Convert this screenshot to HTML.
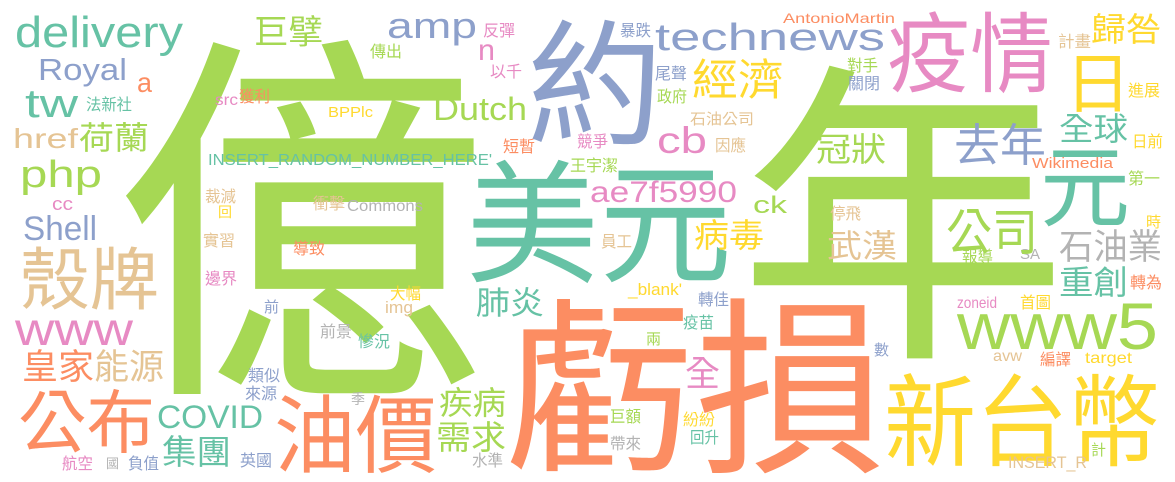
<!DOCTYPE html>
<html><head><meta charset="utf-8"><style>
html,body{margin:0;padding:0;background:#fff;width:1175px;height:482px;overflow:hidden}
svg{display:block}
text{font-family:"Liberation Sans","Noto Sans CJK TC",sans-serif}
.G{fill:#a6d854}.O{fill:#fc8d62}.B{fill:#8da0cb}.T{fill:#66c2a5}.Y{fill:#ffd92f}.P{fill:#e78ac3}.N{fill:#e5c494}.R{fill:#b3b3b3}
</style></head><body>
<svg width="1175" height="482" viewBox="0 0 1175 482" xmlns="http://www.w3.org/2000/svg">
<!-- big words -->
<text class="G" transform="translate(114,364) scale(0.97,1)" x="0" y="0" font-size="385">億</text>
<text class="G" transform="translate(738,333) scale(1,0.96)" x="0" y="0" font-size="330">年</text>
<text class="O" x="505" y="458" font-size="190" textLength="380" lengthAdjust="spacingAndGlyphs">虧損</text>
<text class="T" x="466" y="272" font-size="133" textLength="266" lengthAdjust="spacingAndGlyphs">美元</text>
<text class="B" x="527" y="134" font-size="136">約</text>
<text class="P" x="887" y="85" font-size="87" textLength="166" lengthAdjust="spacingAndGlyphs">疫情</text>
<text class="Y" x="884" y="458" font-size="100" textLength="276" lengthAdjust="spacingAndGlyphs">新台幣</text>
<text class="O" x="274" y="466" font-size="85" textLength="163" lengthAdjust="spacingAndGlyphs">油價</text>
<text class="N" x="20" y="304" font-size="68" textLength="139" lengthAdjust="spacingAndGlyphs">殼牌</text>
<text class="O" x="18" y="447" font-size="69" textLength="137" lengthAdjust="spacingAndGlyphs">公布</text>
<text class="Y" x="1065" y="107" font-size="66">日</text>
<text class="T" x="1040" y="219" font-size="90">元</text>
<!-- latin medium -->
<text class="T" x="15" y="47" font-size="44" textLength="168" lengthAdjust="spacingAndGlyphs">delivery</text>
<text class="B" x="38" y="80" font-size="31" textLength="89" lengthAdjust="spacingAndGlyphs">Royal</text>
<text class="O" x="137" y="92" font-size="28" textLength="15" lengthAdjust="spacingAndGlyphs">a</text>
<text class="T" x="25" y="117" font-size="40" textLength="53" lengthAdjust="spacingAndGlyphs">tw</text>
<text class="N" x="13" y="148" font-size="28" textLength="65" lengthAdjust="spacingAndGlyphs">href</text>
<text class="G" x="20" y="187" font-size="38" textLength="82" lengthAdjust="spacingAndGlyphs">php</text>
<text class="P" x="52" y="210" font-size="18" textLength="21" lengthAdjust="spacingAndGlyphs">cc</text>
<text class="B" x="23" y="240" font-size="34" textLength="74" lengthAdjust="spacingAndGlyphs">Shell</text>
<text class="P" x="15" y="345" font-size="46" textLength="118" lengthAdjust="spacingAndGlyphs">www</text>
<text class="T" x="157" y="428" font-size="32" textLength="106" lengthAdjust="spacingAndGlyphs">COVID</text>
<text class="T" x="208" y="165" font-size="16" textLength="284" lengthAdjust="spacingAndGlyphs">INSERT_RANDOM_NUMBER_HERE'</text>
<text class="P" x="215" y="105" font-size="16" textLength="23" lengthAdjust="spacingAndGlyphs">src</text>
<text class="Y" x="328" y="117" font-size="15" textLength="45" lengthAdjust="spacingAndGlyphs">BPPlc</text>
<text class="B" x="387" y="38" font-size="36" textLength="90" lengthAdjust="spacingAndGlyphs">amp</text>
<text class="P" x="478" y="60" font-size="30" textLength="17" lengthAdjust="spacingAndGlyphs">n</text>
<text class="G" x="433" y="120" font-size="32" textLength="94" lengthAdjust="spacingAndGlyphs">Dutch</text>
<text class="R" x="347" y="211" font-size="16" textLength="76" lengthAdjust="spacingAndGlyphs">Commons</text>
<text class="N" x="385" y="313" font-size="17" textLength="28" lengthAdjust="spacingAndGlyphs">img</text>
<text class="Y" x="628" y="295" font-size="17" textLength="54" lengthAdjust="spacingAndGlyphs">_blank'</text>
<text class="P" x="590" y="202" font-size="30" textLength="147" lengthAdjust="spacingAndGlyphs">ae7f5990</text>
<text class="B" x="655" y="50" font-size="38" textLength="230" lengthAdjust="spacingAndGlyphs">technews</text>
<text class="O" x="783" y="23" font-size="14" textLength="112" lengthAdjust="spacingAndGlyphs">AntonioMartin</text>
<text class="P" x="657" y="153" font-size="37" textLength="50" lengthAdjust="spacingAndGlyphs">cb</text>
<text class="G" x="753" y="213" font-size="24" textLength="34" lengthAdjust="spacingAndGlyphs">ck</text>
<text class="O" x="1032" y="168" font-size="15" textLength="81" lengthAdjust="spacingAndGlyphs">Wikimedia</text>
<text class="R" x="1020" y="259" font-size="15" textLength="20" lengthAdjust="spacingAndGlyphs">SA</text>
<text class="P" x="957" y="308" font-size="16" textLength="40" lengthAdjust="spacingAndGlyphs">zoneid</text>
<text class="G" x="957" y="349" font-size="66" textLength="201" lengthAdjust="spacingAndGlyphs">www5</text>
<text class="N" x="993" y="361" font-size="16" textLength="29" lengthAdjust="spacingAndGlyphs">avw</text>
<text class="Y" x="1085" y="363" font-size="16" textLength="47" lengthAdjust="spacingAndGlyphs">target</text>
<text class="N" x="1008" y="468" font-size="17" textLength="79" lengthAdjust="spacingAndGlyphs">INSERT_R</text>
<!-- CJK medium -->
<text class="G" x="79" y="149" font-size="32" textLength="70" lengthAdjust="spacingAndGlyphs">荷蘭</text>
<text class="O" x="22" y="379" font-size="35" textLength="72" lengthAdjust="spacingAndGlyphs">皇家</text>
<text class="N" x="94" y="379" font-size="35" textLength="70" lengthAdjust="spacingAndGlyphs">能源</text>
<text class="T" x="162" y="464" font-size="34" textLength="69" lengthAdjust="spacingAndGlyphs">集團</text>
<text class="G" x="254" y="44" font-size="34" textLength="69" lengthAdjust="spacingAndGlyphs">巨擘</text>
<text class="G" x="439" y="414" font-size="32" textLength="67" lengthAdjust="spacingAndGlyphs">疾病</text>
<text class="G" x="436" y="449" font-size="33" textLength="70" lengthAdjust="spacingAndGlyphs">需求</text>
<text class="T" x="476" y="314" font-size="32" textLength="68" lengthAdjust="spacingAndGlyphs">肺炎</text>
<text class="Y" x="692" y="95" font-size="43" textLength="92" lengthAdjust="spacingAndGlyphs">經濟</text>
<text class="G" x="816" y="161" font-size="33" textLength="70" lengthAdjust="spacingAndGlyphs">冠狀</text>
<text class="B" x="954" y="161" font-size="45" textLength="92" lengthAdjust="spacingAndGlyphs">去年</text>
<text class="T" x="1059" y="140" font-size="32" textLength="69" lengthAdjust="spacingAndGlyphs">全球</text>
<text class="Y" x="1091" y="41" font-size="33" textLength="70" lengthAdjust="spacingAndGlyphs">歸咎</text>
<text class="Y" x="694" y="247" font-size="33" textLength="70" lengthAdjust="spacingAndGlyphs">病毒</text>
<text class="N" x="827" y="257" font-size="32" textLength="70" lengthAdjust="spacingAndGlyphs">武漢</text>
<text class="G" x="946" y="250" font-size="50" textLength="92" lengthAdjust="spacingAndGlyphs">公司</text>
<text class="R" x="1059" y="259" font-size="35" textLength="103" lengthAdjust="spacingAndGlyphs">石油業</text>
<text class="T" x="1059" y="294" font-size="33" textLength="69" lengthAdjust="spacingAndGlyphs">重創</text>
<text class="P" x="685" y="386" font-size="35">全</text>
<!-- CJK small -->
<g font-size="16">
<text class="T" x="86" y="110" textLength="46" lengthAdjust="spacingAndGlyphs">法新社</text>
<text class="P" x="62" y="469" textLength="31" lengthAdjust="spacingAndGlyphs">航空</text>
<text class="R" x="106" y="468" font-size="13">國</text>
<text class="B" x="128" y="469" textLength="31" lengthAdjust="spacingAndGlyphs">負值</text>
<text class="B" x="240" y="466" textLength="32" lengthAdjust="spacingAndGlyphs">英國</text>
<text class="B" x="248" y="381" textLength="32" lengthAdjust="spacingAndGlyphs">類似</text>
<text class="B" x="245" y="399" textLength="32" lengthAdjust="spacingAndGlyphs">來源</text>
<text class="B" x="264" y="312" font-size="15">前</text>
<text class="P" x="205" y="284" textLength="32" lengthAdjust="spacingAndGlyphs">邊界</text>
<text class="N" x="203" y="246" textLength="32" lengthAdjust="spacingAndGlyphs">實習</text>
<text class="Y" x="218" y="217" font-size="14">回</text>
<text class="N" x="205" y="202" textLength="31" lengthAdjust="spacingAndGlyphs">裁減</text>
<text class="O" x="239" y="102" textLength="31" lengthAdjust="spacingAndGlyphs">獲利</text>
<text class="G" x="370" y="57" textLength="32" lengthAdjust="spacingAndGlyphs">傳出</text>
<text class="P" x="483" y="36" textLength="32" lengthAdjust="spacingAndGlyphs">反彈</text>
<text class="P" x="490" y="77" textLength="32" lengthAdjust="spacingAndGlyphs">以千</text>
<text class="O" x="503" y="152" textLength="32" lengthAdjust="spacingAndGlyphs">短暫</text>
<text class="B" x="620" y="36" textLength="31" lengthAdjust="spacingAndGlyphs">暴跌</text>
<text class="B" x="655" y="79" textLength="32" lengthAdjust="spacingAndGlyphs">尾聲</text>
<text class="G" x="657" y="102" textLength="30" lengthAdjust="spacingAndGlyphs">政府</text>
<text class="P" x="577" y="147" textLength="31" lengthAdjust="spacingAndGlyphs">競爭</text>
<text class="G" x="570" y="171" textLength="48" lengthAdjust="spacingAndGlyphs">王宇潔</text>
<text class="N" x="313" y="209" textLength="32" lengthAdjust="spacingAndGlyphs">衝擊</text>
<text class="O" x="293" y="254" textLength="32" lengthAdjust="spacingAndGlyphs">導致</text>
<text class="Y" x="390" y="299" textLength="31" lengthAdjust="spacingAndGlyphs">大幅</text>
<text class="R" x="320" y="337" textLength="32" lengthAdjust="spacingAndGlyphs">前景</text>
<text class="T" x="358" y="347" textLength="32" lengthAdjust="spacingAndGlyphs">慘況</text>
<text class="R" x="351" y="404" font-size="14">季</text>
<text class="R" x="472" y="466" textLength="31" lengthAdjust="spacingAndGlyphs">水準</text>
<text class="G" x="646" y="344" font-size="15">兩</text>
<text class="G" x="610" y="422" textLength="31" lengthAdjust="spacingAndGlyphs">巨額</text>
<text class="R" x="610" y="449" textLength="31" lengthAdjust="spacingAndGlyphs">帶來</text>
<text class="N" x="601" y="247" textLength="31" lengthAdjust="spacingAndGlyphs">員工</text>
<text class="N" x="690" y="124" font-size="15" textLength="64" lengthAdjust="spacingAndGlyphs">石油公司</text>
<text class="N" x="715" y="151" textLength="31" lengthAdjust="spacingAndGlyphs">因應</text>
<text class="G" x="847" y="71" textLength="31" lengthAdjust="spacingAndGlyphs">對手</text>
<text class="B" x="848" y="89" textLength="32" lengthAdjust="spacingAndGlyphs">關閉</text>
<text class="N" x="1058" y="47" textLength="33" lengthAdjust="spacingAndGlyphs">計畫</text>
<text class="Y" x="1128" y="96" textLength="32" lengthAdjust="spacingAndGlyphs">進展</text>
<text class="Y" x="1132" y="147" textLength="31" lengthAdjust="spacingAndGlyphs">日前</text>
<text class="G" x="1128" y="184" textLength="32" lengthAdjust="spacingAndGlyphs">第一</text>
<text class="N" x="830" y="219" textLength="31" lengthAdjust="spacingAndGlyphs">停飛</text>
<text class="Y" x="1146" y="227" font-size="15">時</text>
<text class="G" x="962" y="262" textLength="31" lengthAdjust="spacingAndGlyphs">報導</text>
<text class="O" x="1130" y="288" textLength="32" lengthAdjust="spacingAndGlyphs">轉為</text>
<text class="B" x="698" y="305" textLength="31" lengthAdjust="spacingAndGlyphs">轉佳</text>
<text class="Y" x="1020" y="308" textLength="31" lengthAdjust="spacingAndGlyphs">首圖</text>
<text class="T" x="683" y="328" textLength="31" lengthAdjust="spacingAndGlyphs">疫苗</text>
<text class="B" x="874" y="355" font-size="15">數</text>
<text class="O" x="1040" y="365" textLength="31" lengthAdjust="spacingAndGlyphs">編譯</text>
<text class="Y" x="683" y="425" textLength="32" lengthAdjust="spacingAndGlyphs">紛紛</text>
<text class="T" x="690" y="443" textLength="29" lengthAdjust="spacingAndGlyphs">回升</text>
<text class="G" x="1091" y="455" font-size="15">計</text>
</g>
</svg>
</body></html>
